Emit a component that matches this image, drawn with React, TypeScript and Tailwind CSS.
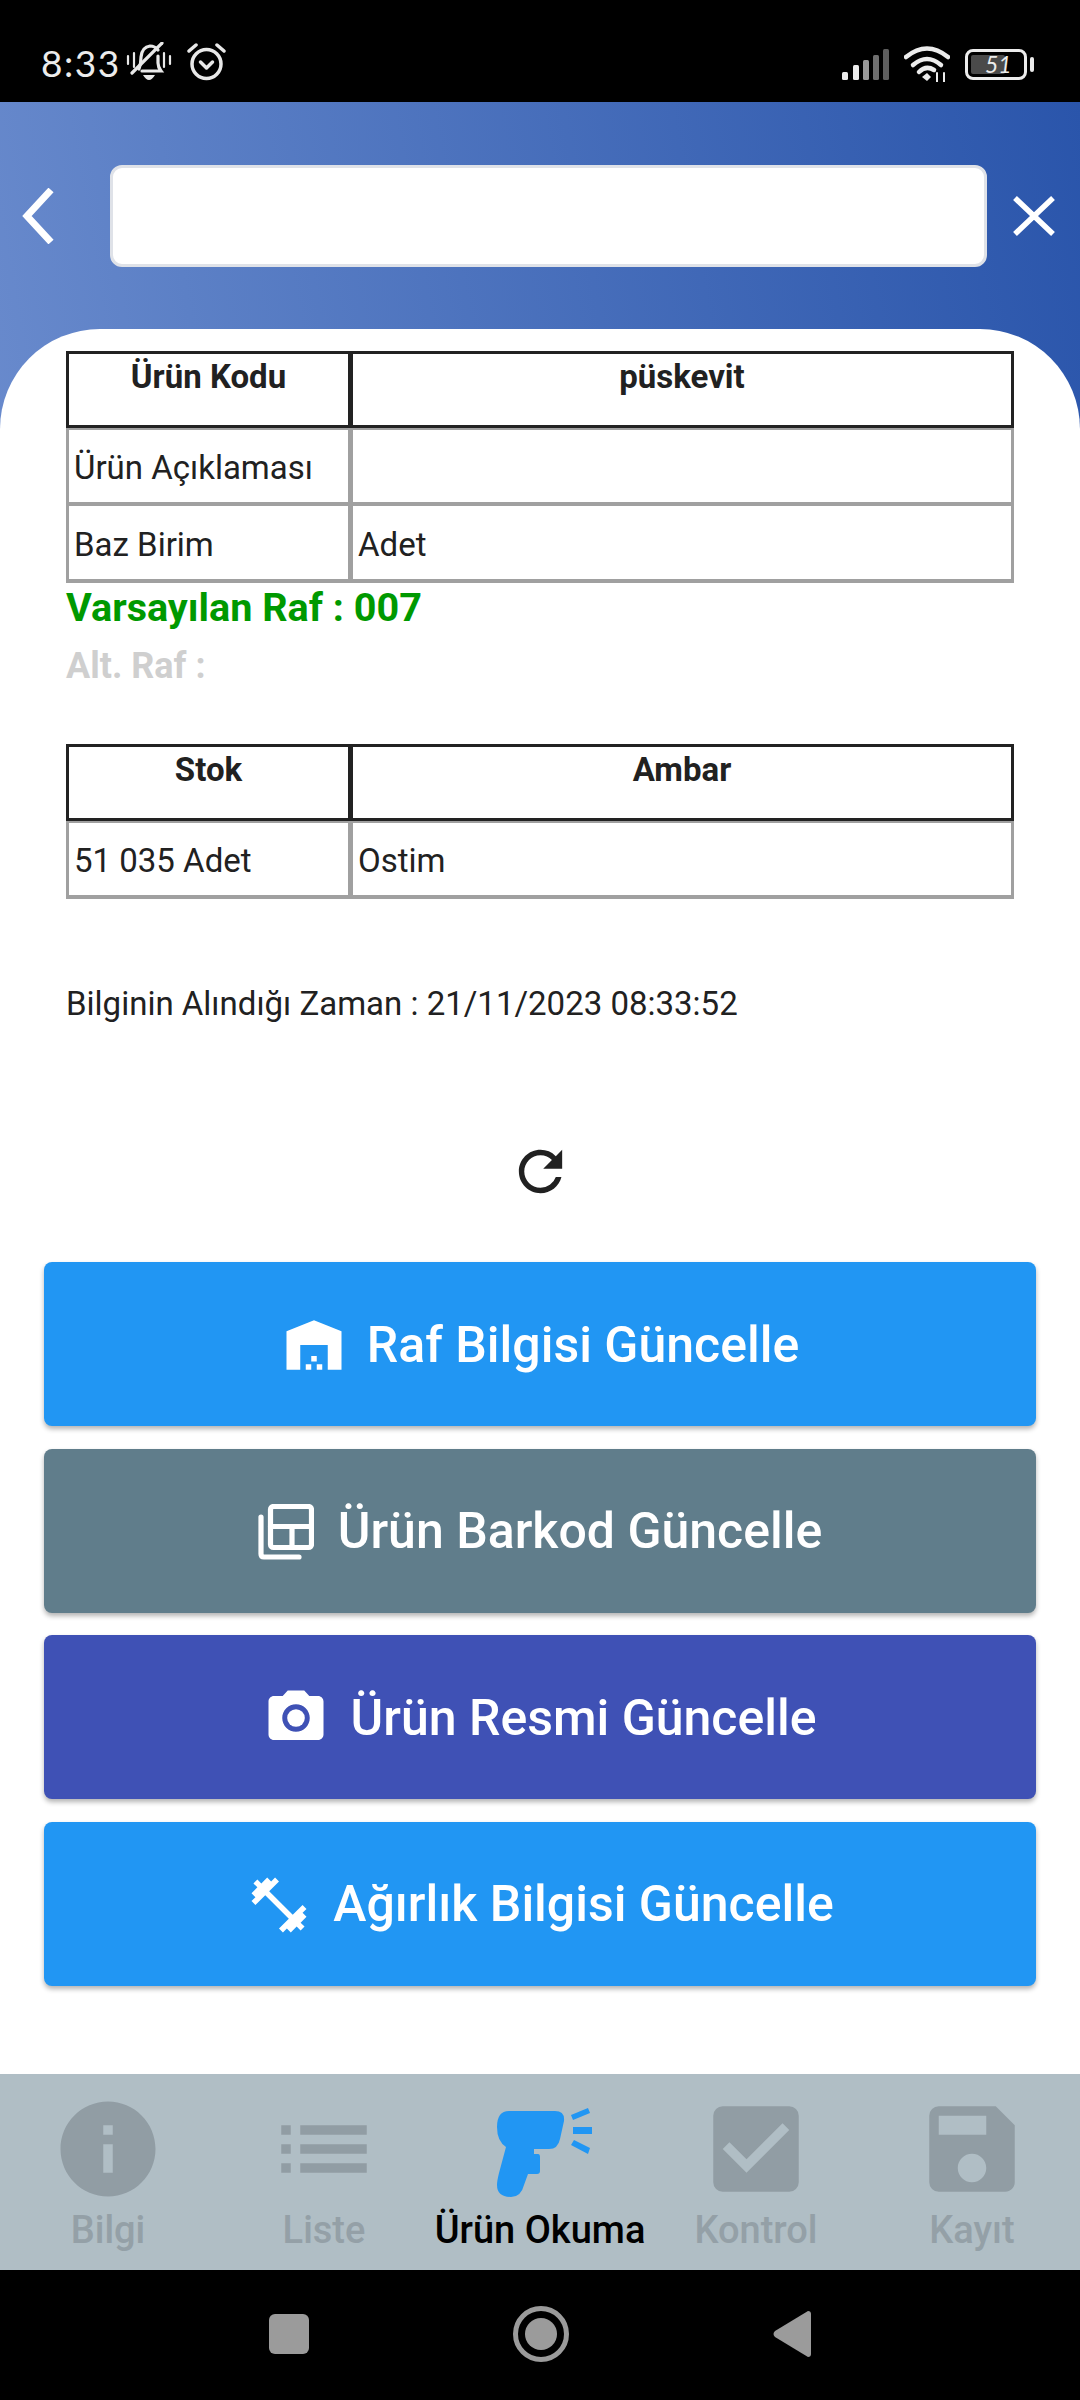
import { MdInfo, MdList, MdCheckBox, MdSave, MdWarehouse, MdPhotoCamera, MdFitnessCenter, MdRefresh } from "react-icons/md";
import type { ReactNode } from "react";

function Row({ a, b, head, first }: { a: string; b: string; head?: boolean; first?: boolean }) {
  if (head) {
    return (
      <div className="flex h-[77px] border-[3px] border-[#222222] text-[33px] font-bold leading-[38px] text-[#212121]">
        <div className="flex w-[279px] justify-center pt-[4px]">{a}</div>
        <div className="flex flex-1 justify-center border-l-[5px] border-[#222222] pt-[4px]">{b}</div>
      </div>
    );
  }
  return (
    <div className={`flex items-center border-x-[3px] border-b-[4px] border-[#a0a0a0] text-[33px] leading-[38px] text-[#212121] ${first ? "h-[78px] border-t-[2px]" : "h-[77px]"}`}>
      <div className="flex h-full w-[279px] items-center pl-[5px] pt-[4px]">{a}</div>
      <div className="flex h-full flex-1 items-center border-l-[5px] border-[#a0a0a0] pl-[5px] pt-[4px]">{b}</div>
    </div>
  );
}

function ActionButton({ color, icon, label, gap }: { color: string; icon: ReactNode; label: string; gap: string }) {
  return (
    <div className={`flex h-[164px] items-center justify-center rounded-[8px] pt-[2px] text-[50px] font-medium text-white shadow-[0_3px_5px_rgba(0,0,0,0.3)] ${color} ${gap}`}>
      {icon}
      <span>{label}</span>
    </div>
  );
}

function NavItem({ icon, label, active }: { icon: ReactNode; label: string; active?: boolean }) {
  return (
    <div className={`flex flex-col items-center ${active ? "text-black" : "text-[#919da4]"}`}>
      <div className="flex h-[114px] w-[114px] items-center justify-center">{icon}</div>
      <span className={`mt-[2px] text-[38px] leading-[44px] font-medium ${active ? "" : "opacity-90"}`}>{label}</span>
    </div>
  );
}

function GunIcon() {
  return (
    <svg className="ml-[10px] mt-[6px]" width="96" height="90" viewBox="0 0 96 90" fill="#2196f3">
      <path d="M12 4H58Q68 4 67 14L63 32Q61 42 52 42H37V47H41Q43 47 43 50V64Q43 67 40 67H31L27 78Q24 90 14 90Q0 90 0 78Q0 74 2 66L9 40Q0 34 0 20Q0 4 12 4Z" />
      <path d="M74 8L91 1L93 6L76 13Z" />
      <rect x="76" y="20" width="19" height="7" />
      <path d="M74 38L77 33L93 41L91 47Z" />
    </svg>
  );
}

function BarcodeIcon() {
  return (
    <svg width="56" height="56" viewBox="0 0 56 56" fill="none" stroke="#ffffff" strokeWidth="5.2" strokeLinecap="round" strokeLinejoin="round">
      <rect x="12.5" y="2.5" width="41" height="41" rx="3" />
      <path d="M12.5 22.5H53.5M34 22.5V43.5" />
      <path d="M3 13V50Q3 53 6 53H41" />
    </svg>
  );
}

function StatusLeft() {
  return (
    <div className="flex items-center">
      <span className="text-[37px] leading-none tracking-[1.5px] font-normal text-[#ececec]" style={{ fontFamily: "Lato, sans-serif" }}>8:33</span>
      <svg className="ml-[5px]" width="46" height="40" viewBox="0 0 46 40" fill="none" stroke="#e8e8e8" strokeWidth="3.2" strokeLinecap="round">
        <path d="M2 14V22M8 11V25M38 11V25M44 14V22" strokeWidth="2.2" />
        <path d="M13 27Q15 22 15 15Q16 5 24 4Q29 4 32 8M32 14V21Q32 25 35 29H16" />
        <path d="M6 31L36 1" />
        <path d="M17 33H29Q26 38 23 38Q20 38 17 33Z" fill="#e8e8e8" stroke="none" />
      </svg>
      <svg className="ml-[14px]" width="41" height="38" viewBox="0 0 41 38" fill="none" stroke="#e8e8e8" strokeWidth="3.5" strokeLinecap="round" strokeLinejoin="round">
        <circle cx="20.5" cy="21" r="14.5" />
        <path d="M3 8L10 2M38 8L31 2" />
        <path d="M14.5 19L20.5 25L26.5 19" />
      </svg>
    </div>
  );
}

function StatusRight() {
  return (
    <div className="flex items-center">
      <svg width="48" height="32" viewBox="0 0 48 32">
        <rect x="0" y="24" width="6" height="8" rx="1.5" fill="#ececec" />
        <rect x="11" y="17" width="6" height="15" rx="1.5" fill="#ececec" />
        <rect x="21" y="12" width="6" height="20" rx="1.5" fill="#9a9a9a" />
        <rect x="31" y="7" width="6" height="25" rx="1.5" fill="#6f6f6f" />
        <rect x="41" y="1" width="6" height="31" rx="1.5" fill="#5e5e5e" />
      </svg>
      <svg className="ml-[14px]" width="46" height="36" viewBox="0 0 46 36" fill="none" stroke="#ececec" strokeWidth="4.5" strokeLinecap="round">
        <path d="M2 11Q23 -6 44 11" />
        <path d="M9 19Q23 7 37 19" />
        <path d="M15 26Q22 19 30 24" />
        <path d="M18 31L23 27L27 31L23 35Z" fill="#ececec" stroke="none" />
        <path d="M33 27V36M40 27V36" strokeWidth="2" />
      </svg>
      <div className="ml-[15px] flex h-[31px] w-[62px] items-center rounded-[8px] border-[3px] border-[#ececec] p-[3px]">
        <div className="relative h-full w-[34px] rounded-[2px] bg-[#4a4a4a]">
          <span className="absolute left-[14px] top-[-3px] text-[23px] leading-[24px] italic text-[#ececec]" style={{ fontFamily: "Lato, sans-serif" }}>51</span>
        </div>
      </div>
      <div className="ml-[3px] h-[15px] w-[4px] rounded-[2px] bg-[#ececec]" />
    </div>
  );
}

export default function App() {
  return (
    <div className="flex h-[2400px] w-[1080px] flex-col overflow-hidden bg-white" style={{ fontFamily: "Roboto, sans-serif" }}>
      <div className="flex h-[102px] items-end justify-between bg-black pb-[20px] pl-[41px] pr-[46px]">
        <StatusLeft />
        <StatusRight />
      </div>

      <div className="flex flex-1 flex-col bg-[linear-gradient(80deg,#7997d5_0%,#5c80c6_35%,#2a55ab_100%)]">
        <div className="flex h-[227px] items-center">
          <div className="flex w-[110px] justify-start pl-[2px]">
            <svg width="56" height="56" viewBox="0 0 56 56" fill="none" stroke="#ffffff" strokeWidth="7" className="ml-[8px]"><path d="M41 2L17 28L41 54" /></svg>
          </div>
          <div className="h-[102px] w-[877px] rounded-[12px] border-[3px] border-[#dfe2e8] bg-white" />
          <div className="flex flex-1 justify-center">
            <svg width="42" height="40" viewBox="0 0 42 40" stroke="#ffffff" strokeWidth="5.5"><path d="M2 2L40 38M40 2L2 38" /></svg>
          </div>
        </div>

        <div className="flex flex-1 flex-col rounded-t-[100px] bg-white px-[44px] pt-[22px]">
          <div className="px-[22px]">
            <Row head a="Ürün Kodu" b="püskevit" />
            <Row first a="Ürün Açıklaması" b="" />
            <Row a="Baz Birim" b="Adet" />
            <div className="mt-[3px] text-[39.6px] font-bold leading-[44px] text-[#009900]">Varsayılan Raf : 007</div>
            <div className="mt-[16px] text-[36px] font-bold leading-[40px] text-[#cfcfcf]">Alt. Raf :</div>
            <div className="mt-[58px]">
              <Row head a="Stok" b="Ambar" />
              <Row first a="51 035 Adet" b="Ostim" />
            </div>
            <div className="mt-[86px] text-[33px] leading-[37px] text-[#212121]">Bilginin Alındığı Zaman : 21/11/2023 08:33:52</div>
          </div>
          <div className="mt-[117px] flex justify-center">
            <MdRefresh size={65} color="#212121" />
          </div>
          <div className="mt-[58px] flex flex-col gap-[22.5px]">
            <ActionButton color="bg-[#2196f3]" gap="gap-[20px]" label="Raf Bilgisi Güncelle" icon={<MdWarehouse size={66} />} />
            <ActionButton color="bg-[#607d8b]" gap="gap-[24px]" label="Ürün Barkod Güncelle" icon={<BarcodeIcon />} />
            <ActionButton color="bg-[#3f51b5]" gap="gap-[21px]" label="Ürün Resmi Güncelle" icon={<MdPhotoCamera size={66} />} />
            <ActionButton color="bg-[#2196f3]" gap="gap-[21px]" label="Ağırlık Bilgisi Güncelle" icon={<MdFitnessCenter size={66} />} />
          </div>
        </div>
      </div>

      <div className="grid h-[196px] grid-cols-5 bg-[#b0bec5] pt-[18px]">
        <NavItem label="Bilgi" icon={<MdInfo size={114} />} />
        <NavItem label="Liste" icon={<MdList size={114} />} />
        <NavItem active label="Ürün Okuma" icon={<GunIcon />} />
        <NavItem label="Kontrol" icon={<MdCheckBox size={114} />} />
        <NavItem label="Kayıt" icon={<MdSave size={114} />} />
      </div>

      <div className="flex h-[130px] items-center justify-center bg-black pb-[2px]">
        <div className="flex w-[542px] items-center justify-between">
          <div className="h-[40px] w-[40px] rounded-[6px] bg-[#9b9b9b]" />
          <div className="flex h-[56px] w-[56px] items-center justify-center rounded-full border-[5px] border-[#9b9b9b]">
            <div className="h-[32px] w-[32px] rounded-full bg-[#9b9b9b]" />
          </div>
          <svg width="38" height="46" viewBox="0 0 38 46" fill="#9b9b9b"><path d="M35 0Q38 0 38 3V43Q38 46 35 46L2 26Q-1 23 2 20Z" /></svg>
        </div>
      </div>
    </div>
  );
}
